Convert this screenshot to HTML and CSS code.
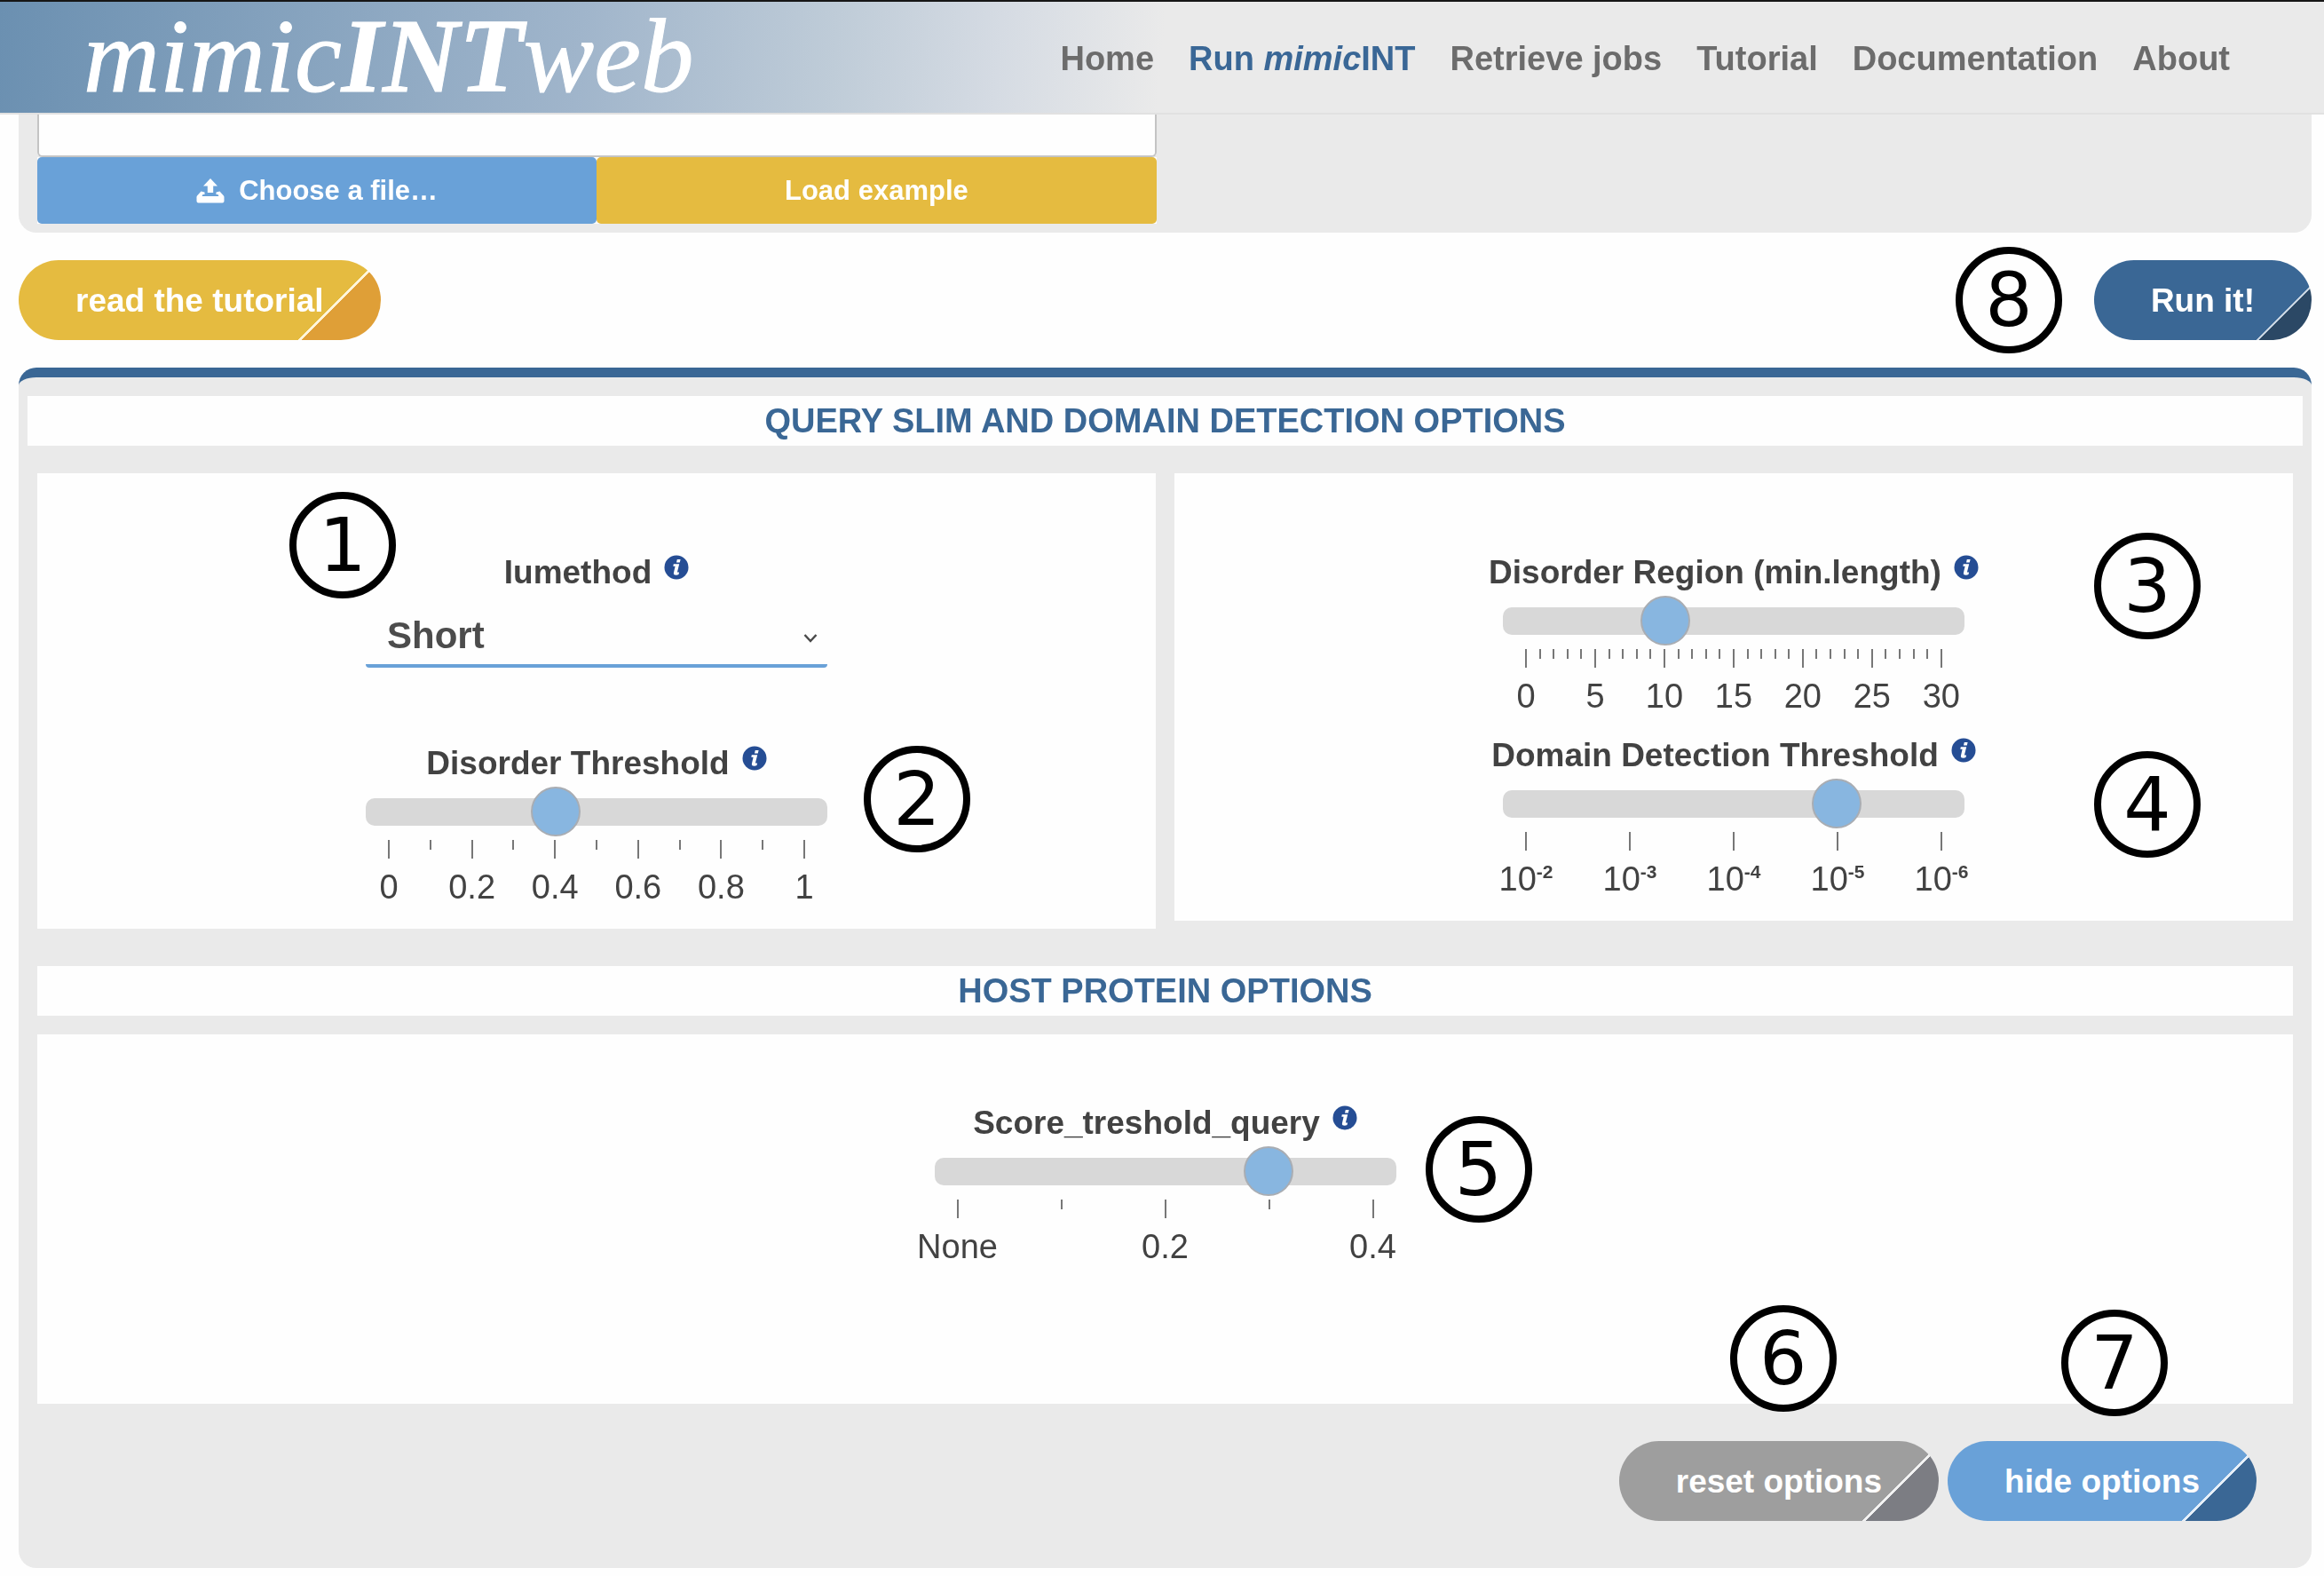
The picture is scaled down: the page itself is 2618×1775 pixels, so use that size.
FILE: index.html
```html
<!DOCTYPE html>
<html lang="en">
<head>
<meta charset="utf-8">
<title>mimicINTweb</title>
<link rel="stylesheet" href="styles.css">
</head>
<body>
<svg class="defs" width="0" height="0" aria-hidden="true">
  <symbol id="info" viewBox="0 0 28 28">
    <circle cx="14" cy="14" r="13.500" fill="#254d94"/>
    <path d="M14.800 5h3.800l-.8 3.600h-3.800zM10.800 10.200h6.400l-2.300 9.200h2.200l-.6 2.600c-2.200 1.200-6.200 1-5.600-1.800l1.700-7.400h-2.300z" fill="#fff"/>
  </symbol>
</svg>

<header class="site-header">
  <a class="logo" href="#">mimic<b>INT</b>web</a>
  <nav class="site-nav">
    <a href="#">Home</a>
    <a class="current" href="#">Run <i>mimic</i>INT</a>
    <a href="#">Retrieve jobs</a>
    <a href="#">Tutorial</a>
    <a href="#">Documentation</a>
    <a href="#">About</a>
  </nav>
</header>

<main class="page">
  <section class="query">
    <div class="query-input">
      <textarea class="query-text" aria-label="Query sequences"></textarea>
      <div class="query-buttons">
        <button class="file-button" type="button">
          <svg class="upload" viewBox="0 0 32 28" aria-hidden="true">
            <path d="M16 0l8 8.500h-4.800V16h-6.400V8.500H8zM5.500 14.500l4 1v2.500H7.500L6.500 20h19l-1-2h-2v-2.500l4-1L31 19.500c.7 1 .5 2 .5 3.500v2.500a2 2 0 0 1-2 2h-27a2 2 0 0 1-2-2V23c0-1.500-.2-2.500.5-3.500z" fill="#fff"/>
          </svg>
          <span>Choose a file…</span>
        </button>
        <button class="example-button" type="button">Load example</button>
      </div>
    </div>
  </section>

  <div class="actions">
    <button class="pill pill-tutorial" type="button">read the tutorial</button>
    <div class="run">
      <span class="pin">8</span>
      <button class="pill pill-run" type="button">Run it!</button>
    </div>
  </div>

  <section class="options">
    <h2 class="title title-wide">QUERY SLIM AND DOMAIN DETECTION OPTIONS</h2>
    <div class="columns">
      <div class="card">
        <div class="field">
          <label class="field-label" for="iumethod">Iumethod <svg class="info"><use href="#info"/></svg></label>
          <div class="select-box">
            <select class="select" id="iumethod"><option>Short</option><option>Long</option></select>
            <svg class="chevron" viewBox="0 0 16 10" aria-hidden="true"><path d="M1.500 1L8 8l6.500-7" fill="none" stroke="#4a4a4a" stroke-width="2.500"/></svg>
          </div>
          <span class="pin pin-1">1</span>
        </div>
        <div class="field field-spaced">
          <label class="field-label" for="disorder">Disorder Threshold <svg class="info"><use href="#info"/></svg></label>
          <input class="slider" id="disorder" type="range" min="0" max="1" step="0.1" value="0.4">
          <ol class="scale"><li>0</li><li class="minor"></li><li>0.2</li><li class="minor"></li><li>0.4</li><li class="minor"></li><li>0.6</li><li class="minor"></li><li>0.8</li><li class="minor"></li><li>1</li></ol>
          <span class="pin pin-2">2</span>
        </div>
      </div>
      <div class="card">
        <div class="field">
          <label class="field-label" for="region">Disorder Region (min.length) <svg class="info"><use href="#info"/></svg></label>
          <input class="slider" id="region" type="range" min="0" max="30" value="10">
          <ol class="scale"><li>0</li><li class="minor"></li><li class="minor"></li><li class="minor"></li><li class="minor"></li><li>5</li><li class="minor"></li><li class="minor"></li><li class="minor"></li><li class="minor"></li><li>10</li><li class="minor"></li><li class="minor"></li><li class="minor"></li><li class="minor"></li><li>15</li><li class="minor"></li><li class="minor"></li><li class="minor"></li><li class="minor"></li><li>20</li><li class="minor"></li><li class="minor"></li><li class="minor"></li><li class="minor"></li><li>25</li><li class="minor"></li><li class="minor"></li><li class="minor"></li><li class="minor"></li><li>30</li></ol>
          <span class="pin pin-3">3</span>
        </div>
        <div class="field field-next">
          <label class="field-label" for="domain">Domain Detection Threshold <svg class="info"><use href="#info"/></svg></label>
          <input class="slider" id="domain" type="range" min="2" max="6" value="5">
          <ol class="scale"><li><span>10<sup>-2</sup></span></li><li><span>10<sup>-3</sup></span></li><li><span>10<sup>-4</sup></span></li><li><span>10<sup>-5</sup></span></li><li><span>10<sup>-6</sup></span></li></ol>
          <span class="pin pin-4">4</span>
        </div>
      </div>
    </div>

    <h2 class="title">HOST PROTEIN OPTIONS</h2>
    <div class="card card-host">
      <div class="field">
        <label class="field-label" for="score">Score_treshold_query <svg class="info"><use href="#info"/></svg></label>
        <input class="slider" id="score" type="range" min="0" max="0.4" step="0.1" value="0.3">
        <ol class="scale"><li>None</li><li class="minor"></li><li>0.2</li><li class="minor"></li><li>0.4</li></ol>
        <span class="pin pin-5">5</span>
      </div>
    </div>

    <div class="footer-actions">
      <div class="pinned">
        <span class="pin pin-6">6</span>
        <button class="pill pill-reset" type="button">reset options</button>
      </div>
      <div class="pinned">
        <span class="pin pin-7">7</span>
        <button class="pill pill-hide" type="button">hide options</button>
      </div>
    </div>
  </section>
</main>
</body>
</html>
```
FILE: styles.css
```css
* { box-sizing: border-box; }

body {
  margin: 0;
  background: #fefefe;
  color: #424242;
  font-family: "Liberation Sans", Arial, sans-serif;
  font-size: 38px;
  line-height: 44px;
}

button, select, textarea { font: inherit; }
button { cursor: pointer; }
.defs { position: absolute; }

/* Header */
.site-header {
  display: flex;
  align-items: center;
  justify-content: space-between;
  height: 129px;
  padding: 0 106px 0 94px;
  border-top: 2px solid #161616;
  border-bottom: 2px solid #e1e1e1;
  background: linear-gradient(95deg, #6b90b1 0%, #a0b5cb 25%, #bfccd8 36%, #d5dbe3 43%, #eaeaea 50%);
}
.logo {
  padding-bottom: 3px;
  color: #fff;
  font-family: "Liberation Serif", "Times New Roman", serif;
  font-size: 119px;
  font-style: italic;
  line-height: 120px;
  text-decoration: none;
  -webkit-text-stroke: 1px #fff;
}
.site-nav { display: flex; gap: 39px; padding-top: 2px; font-weight: bold; }
.site-nav a { color: #6c6c6c; text-decoration: none; white-space: nowrap; }
.site-nav .current { color: #3a6796; }

.page { padding: 0 14px 9px 21px; }

/* Query box */
.query {
  padding: 0 21px 10px;
  border-radius: 0 0 20px 20px;
  background: #eaeaea;
}
.query-input { width: calc(50% - 10px); }
.query-text {
  display: block;
  width: 100%;
  height: 48px;
  border: 2px solid #c4c4c4;
  border-top: 0;
  border-radius: 0 0 6px 6px;
  background: #fefefe;
  resize: none;
}
.query-buttons { display: flex; background: #fefefe; }
.query-buttons button {
  display: flex;
  flex: 1;
  align-items: center;
  justify-content: center;
  gap: 16px;
  height: 75px;
  border: 0;
  border-radius: 5px;
  color: #fff;
  font-size: 31px;
  font-weight: bold;
}
.query-buttons .file-button { background: #69a1d8; }
.query-buttons .example-button { background: #e5bb40; }
.upload { width: 32px; height: 28px; }

/* Pill buttons with a coloured corner */
.pill {
  height: 90px;
  padding: 2px 64px 0;
  border: 0;
  border-radius: 45px;
  color: #fff;
  font-size: 37px;
  font-weight: bold;
  white-space: nowrap;
}
.pill-tutorial { background: linear-gradient(315deg, #df9f37 63px, #fff5da 63px 66px, #e5bb40 66px); }
.pill-run { background: linear-gradient(315deg, #2b4865 42px, #c5d2df 42px 44px, #3a6795 44px); }
.pill-reset { background: linear-gradient(315deg, #7c7d83 58px, #f2f2f2 58px 61px, #9e9e9e 61px); }
.pill-hide { background: linear-gradient(315deg, #3a6795 57px, #e6eff8 57px 60px, #69a1d8 60px); }

.actions { display: flex; justify-content: space-between; padding: 31px 0; }
.run { display: flex; align-items: center; gap: 36px; height: 90px; }

/* Numbered pins */
.pin {
  display: flex;
  align-items: center;
  justify-content: center;
  width: 120px;
  height: 120px;
  border: 8px solid #000;
  border-radius: 50%;
  background: #fefefe;
  color: #000;
  font-family: "DejaVu Sans", Verdana, sans-serif;
  font-size: 84px;
  line-height: 100px;
}
.field .pin, .pinned .pin { position: absolute; }
.pin-1 { top: -69px; left: -86px; }
.pin-2 { top: 2px; right: -161px; }
.pin-3 { top: -23px; right: -266px; }
.pin-4 { top: 17px; right: -266px; }
.pin-5 { top: 14px; right: -153px; }
.pin-6 { bottom: 123px; left: 125px; }
.pin-7 { bottom: 118px; left: 128px; }

/* Options */
.options {
  padding: 21px 21px 53px;
  border-top: 11px solid #3a6795;
  border-radius: 20px;
  background: #eaeaea;
}
.title {
  margin: 0 0 21px;
  padding: 6px 0;
  background: #fefefe;
  color: #3a6795;
  font-size: 38px;
  font-weight: bold;
  line-height: 44px;
  text-align: center;
}
.title-wide { margin: 0 -11px 31px; }
.columns {
  display: grid;
  grid-template-columns: 1fr 1fr;
  gap: 21px;
  align-items: start;
  margin-bottom: 42px;
}
.card { padding: 90px 20px 24px; background: #fefefe; }
.card-host { padding: 78px 20px 154px; }

.field { position: relative; width: 520px; margin: 0 auto; }
.field-spaced { margin-top: 86px; }
.field-next { margin-top: 22px; }
.field-label {
  display: flex;
  justify-content: center;
  gap: 14px;
  margin: 0 -40px;
  font-size: 37px;
  font-weight: bold;
  white-space: nowrap;
}
.info { width: 28px; height: 28px; margin-top: 2px; }

.select-box { position: relative; padding-top: 9px; }
.select {
  display: block;
  width: 100%;
  height: 76px;
  padding: 8px 24px 0;
  border: 0;
  border-bottom: 4px solid #69a1d8;
  border-radius: 4px;
  background: transparent;
  color: #4c4c4c;
  font-size: 42px;
  font-weight: bold;
  appearance: none;
}
.chevron { position: absolute; top: 47px; right: 11px; width: 16px; height: 10px; }

.slider {
  display: block;
  width: 100%;
  height: 56px;
  margin: 4px 0;
  background: transparent;
  appearance: none;
}
.slider::-webkit-slider-runnable-track {
  height: 31px;
  border-radius: 10px;
  background: #d8d8d8;
}
.slider::-webkit-slider-thumb {
  width: 56px;
  height: 56px;
  margin-top: -13px;
  border: 2px solid #a9adb3;
  border-radius: 50%;
  background: #88b6e0;
  appearance: none;
}

.scale {
  display: flex;
  justify-content: space-between;
  height: 76px;
  margin: 0;
  padding: 0 25px;
  list-style: none;
}
.scale li {
  display: flex;
  flex-direction: column;
  align-items: center;
  gap: 10px;
  width: 2px;
  white-space: nowrap;
}
.scale li::before {
  flex: none;
  width: 2px;
  height: 21px;
  background: #777;
  content: "";
}
.scale .minor::before { height: 11px; }
.scale sup {
  font-size: 21px;
  font-weight: bold;
  line-height: 0;
  vertical-align: 14px;
}

.footer-actions {
  display: flex;
  justify-content: flex-end;
  gap: 10px;
  padding: 42px 41px 0 0;
}
.pinned { position: relative; }
```
